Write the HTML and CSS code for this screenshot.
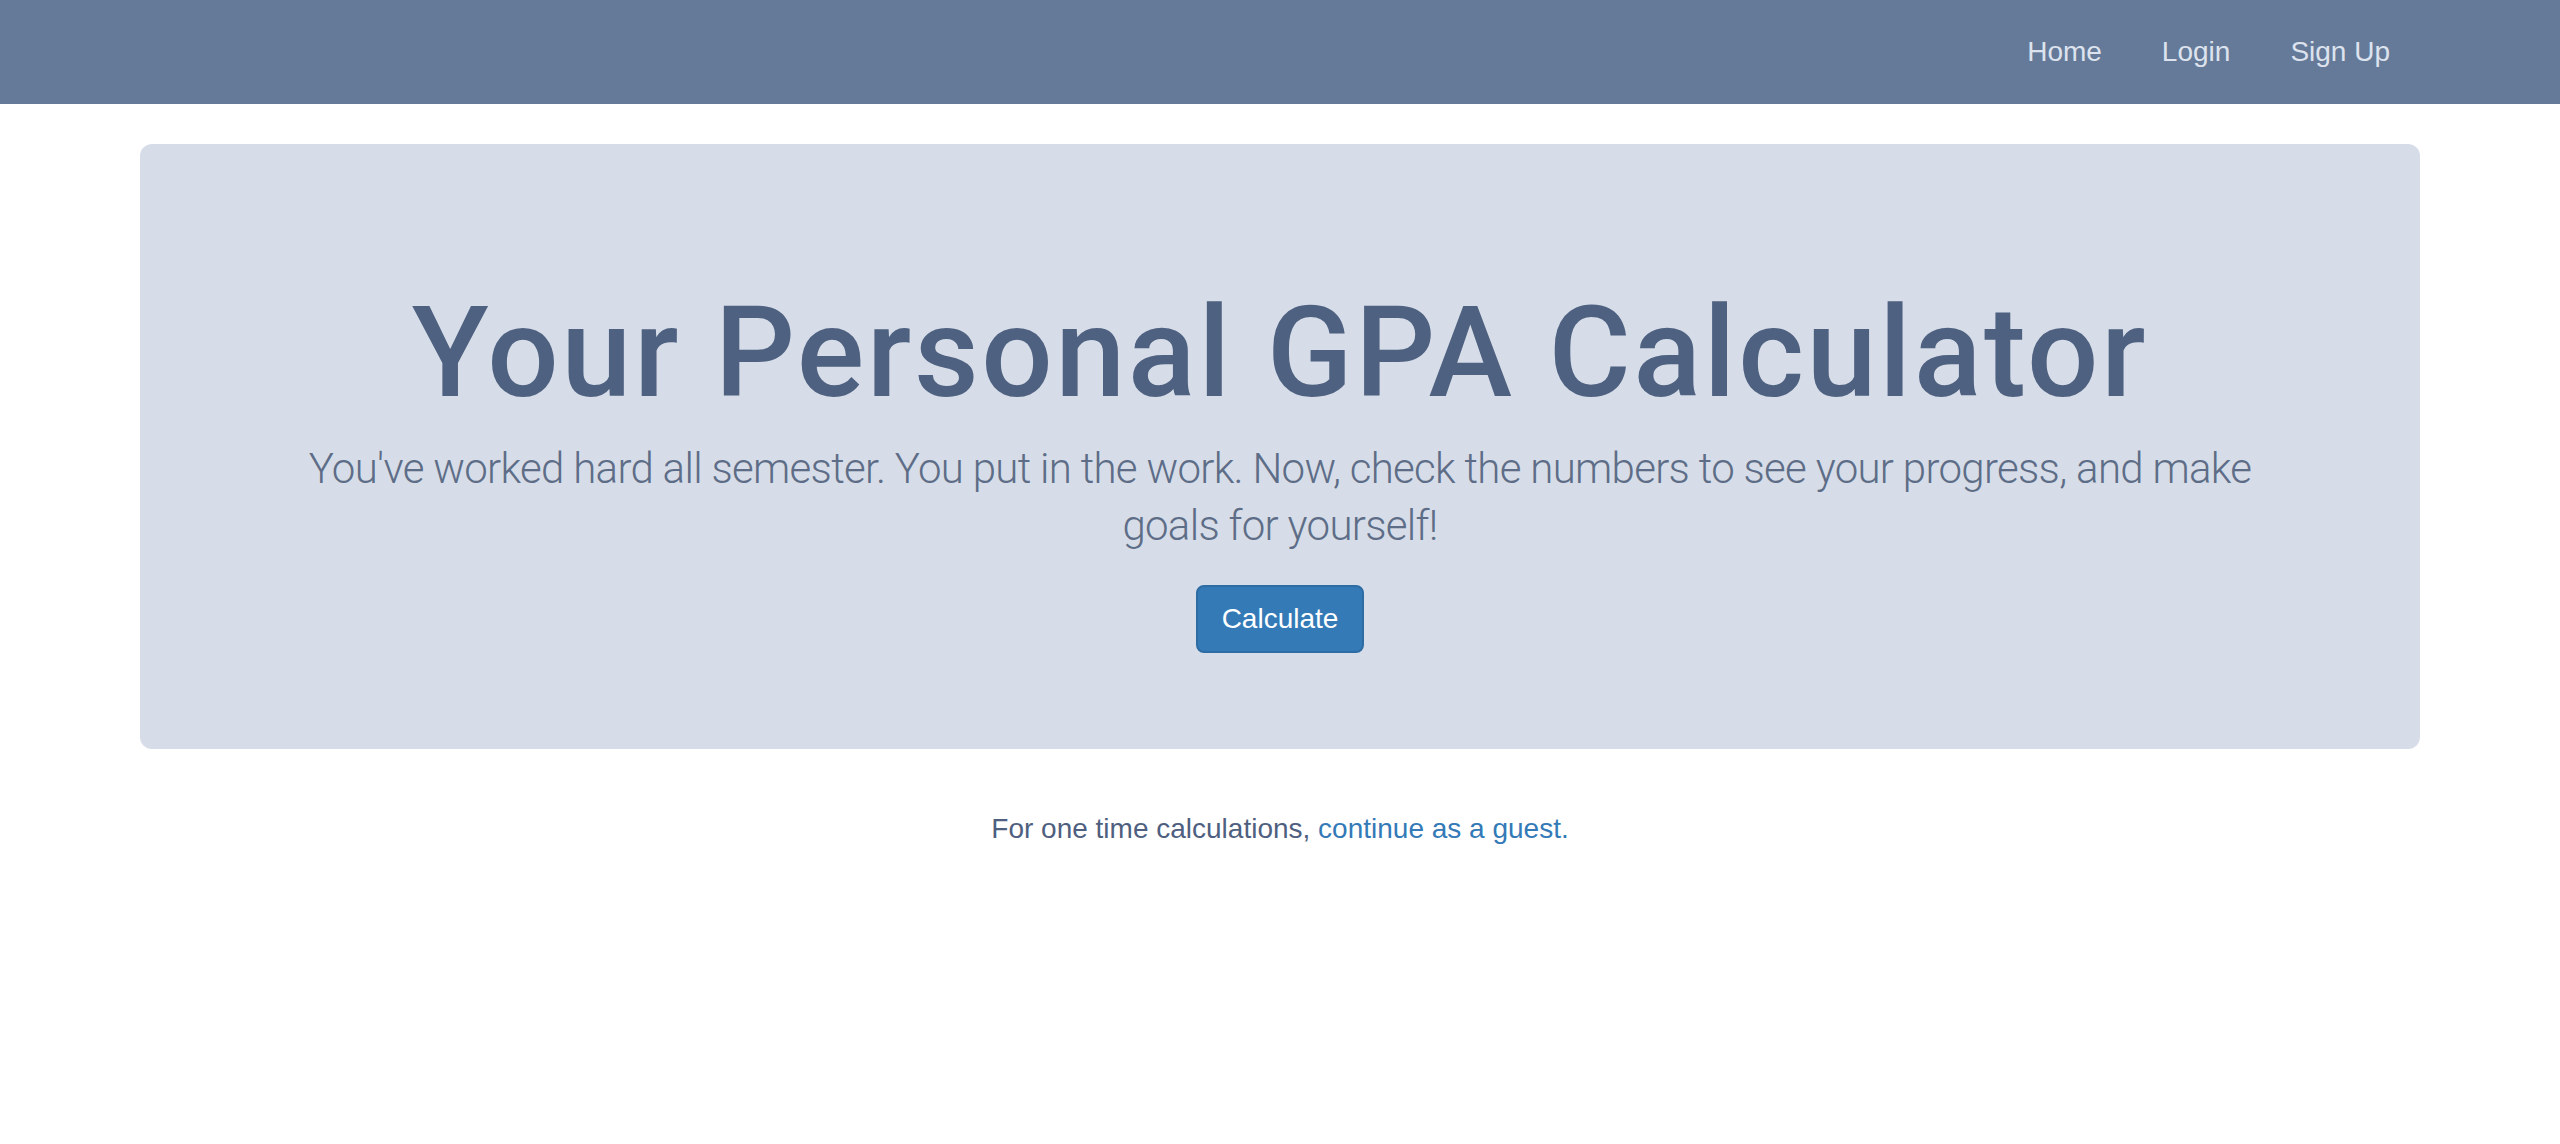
FILE: index.html
```html
<!DOCTYPE html>
<html lang="en">
<head>
<meta charset="utf-8">
<title>GPA Calculator</title>
<link rel="stylesheet" href="styles.css">
</head>
<body>
<nav class="navbar">
  <ul class="nav-links">
    <li><a href="#">Home</a></li>
    <li><a href="#">Login</a></li>
    <li><a href="#">Sign Up</a></li>
  </ul>
</nav>
<main class="container">
  <section class="jumbotron">
    <h1 class="title">Your Personal GPA Calculator</h1>
    <p class="lead">You've worked hard all semester. You put in the work. Now, check the numbers to see your progress, and make goals for yourself!</p>
    <a class="btn" href="#">Calculate</a>
  </section>
  <p class="guest">For one time calculations, <a href="#">continue as a guest.</a></p>
</main>
</body>
</html>
```

FILE: styles.css
```css
* { box-sizing: border-box; }
html, body { margin: 0; padding: 0; }
body {
  background: #ffffff;
  font-family: "Liberation Sans", Arial, sans-serif;
  color: #4f6180;
}
.navbar {
  height: 104px;
  background: #657a98;
  display: flex;
  justify-content: flex-end;
  align-items: center;
  padding-right: 140px;
}
.nav-links {
  list-style: none;
  margin: 0;
  padding: 0;
  display: flex;
}
.nav-links a {
  display: block;
  padding: 0 30px;
  font-size: 28px;
  line-height: 40px;
  color: #dde3ee;
  text-decoration: none;
}
.container {
  width: 2280px;
  margin: 40px auto 0;
}
.jumbotron {
  background: #d6dde8;
  border-radius: 12px;
  padding: 96px 140px;
  text-align: center;
}
.title {
  margin: 44px 0 17px;
  font-family: Roboto, "Liberation Sans", sans-serif;
  font-size: 126px;
  line-height: 138.6px;
  font-weight: 500;
  letter-spacing: 2.5px;
  color: #4f6180;
}
.lead {
  margin: 0 0 31px;
  font-family: Roboto, "Liberation Sans", sans-serif;
  font-weight: 300;
  font-size: 42px;
  line-height: 57px;
  letter-spacing: -0.7px;
  color: #5e6d87;
}
.btn {
  display: inline-block;
  vertical-align: top;
  padding: 12px 24px;
  font-size: 28px;
  line-height: 40px;
  color: #ffffff;
  background: #337ab7;
  border: 2px solid #2e6da4;
  border-radius: 8px;
  text-decoration: none;
}
.guest {
  margin: 60px 0 0;
  text-align: center;
  font-size: 28px;
  line-height: 40px;
  color: #4f5f7f;
}
.guest a {
  color: #337ab7;
  text-decoration: none;
}
```
